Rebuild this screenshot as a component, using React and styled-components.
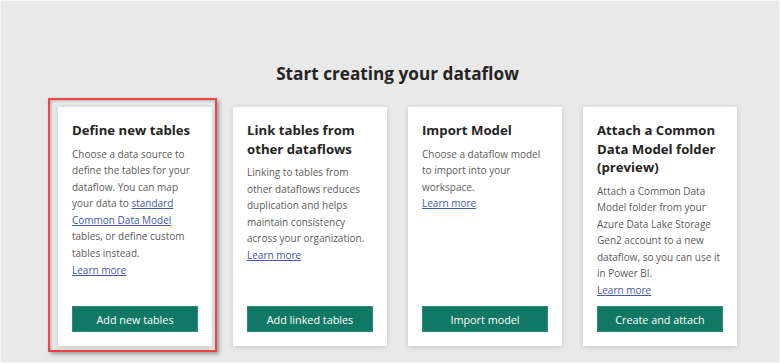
import React from "react";
import styled, { createGlobalStyle } from "styled-components";

const GlobalStyle = createGlobalStyle`
   body {
      margin: 0;
      background: #e9e9e9;
      font-family: "Open Sans", "Noto Sans", sans-serif;
   }
`;

const Page = styled.div`
   width: 780px;
   height: 363px;
   box-sizing: border-box;
   border: 1px solid #f7f7f7;
   background-color: #e9e9e9;
   padding-top: 61px;
`;

const Title = styled.h2`
   margin: 0 0 22px 15px;
   text-align: center;
   font-size: 17.2px;
   line-height: 23px;
   font-weight: 700;
   color: #252423;
`;

const CardRow = styled.div`
   display: flex;
   gap: 21px;
   padding-left: 57px;
`;

const Slot = styled.div`
   position: relative;
`;

const Highlight = styled.div`
   position: absolute;
   top: -9px;
   left: -10px;
   right: -5px;
   bottom: -6px;
   border: 2px solid #ee4444;
   box-shadow: 2px 2px 4px rgba(0, 0, 0, 0.35), inset 1px 1px 3px rgba(0, 0, 0, 0.25);
   pointer-events: none;
`;

const Card = styled.div`
   width: 154px;
   height: 239px;
   box-sizing: border-box;
   padding: 14px 14px 14px;
   background-color: #ffffff;
   box-shadow: 0 1px 5px rgba(0, 0, 0, 0.16);
   display: flex;
   flex-direction: column;
`;

const Heading = styled.h3`
   margin: 0 0 6px;
   font-size: 13.2px;
   line-height: 18.5px;
   font-weight: 700;
   color: #252423;
   white-space: nowrap;
`;

const Text = styled.p`
   margin: 0;
   font-size: 10px;
   line-height: 16.6px;
   color: #5c5b59;
   white-space: nowrap;
`;

const Link = styled.a`
   color: #4159a8;
   text-decoration: underline;
   cursor: pointer;
`;

const Button = styled.button`
   margin-top: auto;
   height: 26px;
   width: 100%;
   border: 1px solid #2f8a79;
   background-color: #117865;
   color: #ffffff;
   font-family: "Open Sans", "Noto Sans", sans-serif;
   font-size: 10.8px;
   cursor: pointer;
`;

const App = () => {
   return (
      <>
         <GlobalStyle />
         <Page>
            <Title>Start creating your dataflow</Title>
            <CardRow>
               <Slot>
                  <Card>
                     <Heading>Define new tables</Heading>
                     <Text>
                        Choose a data source to
                        <br />
                        define the tables for your
                        <br />
                        dataflow. You can map
                        <br />
                        your data to <Link>standard</Link>
                        <br />
                        <Link>Common Data Model</Link>
                        <br />
                        tables, or define custom
                        <br />
                        tables instead.
                        <br />
                        <Link>Learn more</Link>
                     </Text>
                     <Button>Add new tables</Button>
                  </Card>
                  <Highlight />
               </Slot>
               <Slot>
                  <Card>
                     <Heading>
                        Link tables from
                        <br />
                        other dataflows
                     </Heading>
                     <Text>
                        Linking to tables from
                        <br />
                        other dataflows reduces
                        <br />
                        duplication and helps
                        <br />
                        maintain consistency
                        <br />
                        across your organization.
                        <br />
                        <Link>Learn more</Link>
                     </Text>
                     <Button>Add linked tables</Button>
                  </Card>
               </Slot>
               <Slot>
                  <Card>
                     <Heading>Import Model</Heading>
                     <Text>
                        Choose a dataflow model
                        <br />
                        to import into your
                        <br />
                        workspace.
                        <br />
                        <Link>Learn more</Link>
                     </Text>
                     <Button>Import model</Button>
                  </Card>
               </Slot>
               <Slot>
                  <Card>
                     <Heading>
                        Attach a Common
                        <br />
                        Data Model folder
                        <br />
                        (preview)
                     </Heading>
                     <Text>
                        Attach a Common Data
                        <br />
                        Model folder from your
                        <br />
                        Azure Data Lake Storage
                        <br />
                        Gen2 account to a new
                        <br />
                        dataflow, so you can use it
                        <br />
                        in Power BI.
                        <br />
                        <Link>Learn more</Link>
                     </Text>
                     <Button>Create and attach</Button>
                  </Card>
               </Slot>
            </CardRow>
         </Page>
      </>
   );
};

export default App;
